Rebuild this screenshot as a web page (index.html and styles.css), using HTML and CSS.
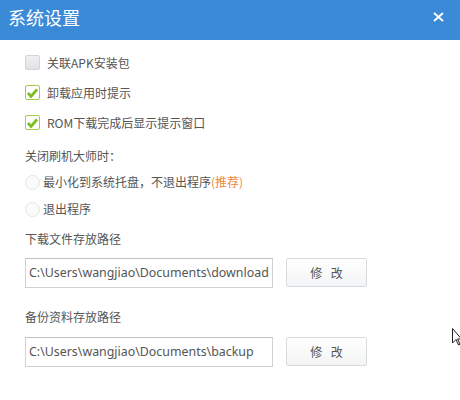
FILE: index.html
```html
<!DOCTYPE html>
<html lang="zh-CN">
<head>
<meta charset="utf-8">
<title>系统设置</title>
<link rel="stylesheet" href="styles.css">
</head>
<body>
<div class="dialog">
  <header class="titlebar">
    <h1 class="title">系统设置</h1>
    <button class="close" aria-label="关闭">
      <svg width="11" height="10" viewBox="0 0 11 10"><path d="M1 1 L10 9 M10 1 L1 9" stroke="#fff" stroke-width="1.9"/></svg>
    </button>
  </header>
  <main class="body">
    <label class="check"><span class="box"></span><span>关联APK安装包</span></label>
    <label class="check"><span class="box on"><svg width="11" height="10" viewBox="0 0 11 10"><path d="M1 5 L4 8.5 L10 1.5" fill="none" stroke="#7cbf1e" stroke-width="2.8"/></svg></span><span>卸载应用时提示</span></label>
    <label class="check"><span class="box on"><svg width="11" height="10" viewBox="0 0 11 10"><path d="M1 5 L4 8.5 L10 1.5" fill="none" stroke="#7cbf1e" stroke-width="2.8"/></svg></span><span>ROM下载完成后显示提示窗口</span></label>

    <p class="label group-label">关闭刷机大师时：</p>
    <label class="radio"><span class="dot"></span><span>最小化到系统托盘，不退出程序<span class="hint">(推荐)</span></span></label>
    <label class="radio"><span class="dot"></span><span>退出程序</span></label>

    <p class="label path-label">下载文件存放路径</p>
    <div class="path-row">
      <div class="path">C:\Users\wangjiao\Documents\download</div>
      <button class="btn">修 改</button>
    </div>

    <p class="label path-label second">备份资料存放路径</p>
    <div class="path-row last">
      <div class="path">C:\Users\wangjiao\Documents\backup</div>
      <button class="btn">修 改</button>
    </div>
  </main>
  <svg class="cursor" width="10" height="18" viewBox="0 0 10 18"><path d="M0.5 0.5 L0.5 15 L4 11.5 L6.5 17 L8 16.3 L5.6 11 L9.5 11 Z" fill="#fff" stroke="#222" stroke-width="1"/></svg>
</div>
</body>
</html>
```
FILE: styles.css
```css
* { box-sizing: border-box; }
html, body { margin: 0; padding: 0; background: #fff; }
body {
  font-family: "Noto Sans", "Noto Sans CJK SC", sans-serif;
  font-size: 12px;
  color: #555;
}
.dialog {
  position: relative;
  width: 460px;
  height: 400px;
  background: #fff;
}
.titlebar {
  height: 40px;
  background: #3b8ad7;
  display: flex;
  align-items: center;
  justify-content: space-between;
  padding: 0 16px 6px 8px;
}
.title {
  margin: 0;
  font-family: "Noto Sans CJK SC", sans-serif;
  font-weight: normal;
  font-size: 18px;
  color: #fff;
  line-height: 1;
}
.close {
  border: 0;
  background: none;
  padding: 0;
  display: flex;
}
.body {
  padding: 15px 0 0 25px;
  display: flex;
  flex-direction: column;
}
.check {
  display: flex;
  align-items: center;
  gap: 7px;
  height: 15px;
  margin-bottom: 15px;
  font-family: "Noto Sans CJK SC", sans-serif;
  line-height: 15px;
}
.box {
  width: 15px;
  height: 15px;
  border: 1px solid #d2d5d8;
  border-radius: 2px;
  background: linear-gradient(#eef0f2, #dfe2e5);
  display: flex;
  align-items: center;
  justify-content: center;
}
.box.on {
  border-color: #9fce4a;
  background: #fff;
}
.label {
  margin: 0;
  height: 16px;
  line-height: 16px;
  font-family: "Noto Sans CJK SC", sans-serif;
}
.group-label { margin-top: 3px; }
.radio {
  display: flex;
  align-items: center;
  gap: 3px;
  height: 16px;
  line-height: 16px;
  margin-top: 10px;
  font-family: "Noto Sans CJK SC", sans-serif;
}
.radio + .radio { margin-top: 11px; }
.dot {
  width: 15px;
  height: 15px;
  border: 1px solid #e2e4e6;
  border-radius: 50%;
  background: #fbfbfb;
}
.hint { color: #ee8844; }
.path-label { margin-top: 14px; }
.path-label.second { margin-top: 21px; }
.path-row {
  display: flex;
  gap: 13px;
  margin-top: 11px;
}
.path-row.last { margin-top: 12px; }
.path {
  width: 248px;
  height: 30px;
  border: 1px solid #cfd2d5;
  border-top-color: #bfc2c5;
  padding: 0 0 0 3px;
  font-size: 12.4px;
  line-height: 28px;
  color: #555;
  white-space: nowrap;
  overflow: hidden;
}
.btn {
  width: 81px;
  height: 29px;
  border: 1px solid #d8dadc;
  border-radius: 2px;
  background: linear-gradient(#ffffff, #f3f4f5);
  font-family: "Noto Sans CJK SC", sans-serif;
  font-size: 12px;
  letter-spacing: 3px;
  text-indent: 3px;
  color: #555;
  padding: 0;
}
.cursor {
  position: absolute;
  left: 452px;
  top: 328px;
}
```
